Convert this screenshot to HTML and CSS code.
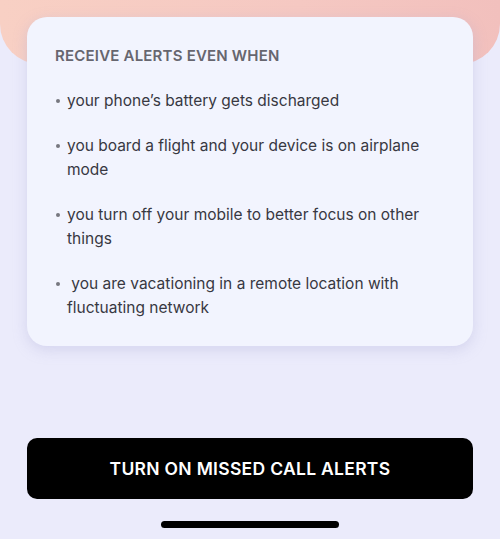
FILE: index.html
```html
<!DOCTYPE html>
<html>
<head>
<meta charset="utf-8">
<link rel="stylesheet" href="styles.css">
</head>
<body>
<div class="screen">
  <div class="blob"></div>
  <div class="content">
    <div class="card">
      <h2 class="title">RECEIVE ALERTS EVEN WHEN</h2>
      <ul class="list">
        <li class="item">your phone’s battery gets discharged</li>
        <li class="item">you board a flight and your device is on airplane mode</li>
        <li class="item">you turn off your mobile to better focus on other things</li>
        <li class="item">&nbsp;you are vacationing in a remote location with fluctuating network</li>
      </ul>
    </div>
    <button class="cta">TURN ON MISSED CALL ALERTS</button>
    <div class="home-bar"></div>
  </div>
</div>
</body>
</html>
```
FILE: styles.css
```css
* { box-sizing: border-box; }
html, body {
  margin: 0;
  padding: 0;
  width: 500px;
  height: 539px;
  overflow: hidden;
}
body {
  background: #ebebfb;
  font-family: Inter, "Noto Sans", sans-serif;
}
.screen {
  position: relative;
  width: 500px;
  height: 539px;
}
.blob {
  position: absolute;
  left: 0;
  top: 0;
  width: 500px;
  height: 64px;
  border-radius: 0 0 40px 40px;
  background: linear-gradient(90deg, #f8d0c4 0%, #f5c8c2 60%, #f2c0bd 100%);
}
.content {
  position: relative;
  display: flex;
  flex-direction: column;
  align-items: center;
  padding: 17px 27px 0;
}
.card {
  width: 446px;
  height: 329px;
  background: #f2f4fe;
  border-radius: 20px;
  box-shadow: 0 4px 14px rgba(170, 170, 215, 0.35);
  padding: 29px 28px 0 28px;
}
.title {
  margin: 0;
  font-size: 15px;
  font-weight: 600;
  color: #66666f;
  letter-spacing: 0.2px;
  line-height: 20px;
}
.list {
  list-style: none;
  margin: 23px 0 0;
  padding: 0;
}
.item {
  position: relative;
  padding-left: 12px;
  font-size: 15.5px;
  line-height: 24px;
  color: #383842;
  margin-bottom: 21px;
}
.item::before {
  content: "";
  position: absolute;
  left: 1px;
  top: 10px;
  width: 4px;
  height: 4px;
  border-radius: 50%;
  background: #77777f;
}
.cta {
  margin-top: 92px;
  width: 446px;
  height: 61px;
  border: none;
  border-radius: 10px;
  background: #000;
  color: #fff;
  font-family: Inter, "Noto Sans", sans-serif;
  font-size: 17.5px;
  font-weight: 600;
  letter-spacing: 0.3px;
}
.home-bar {
  margin-top: 22px;
  width: 178px;
  height: 7px;
  border-radius: 4px;
  background: #000;
}
```
